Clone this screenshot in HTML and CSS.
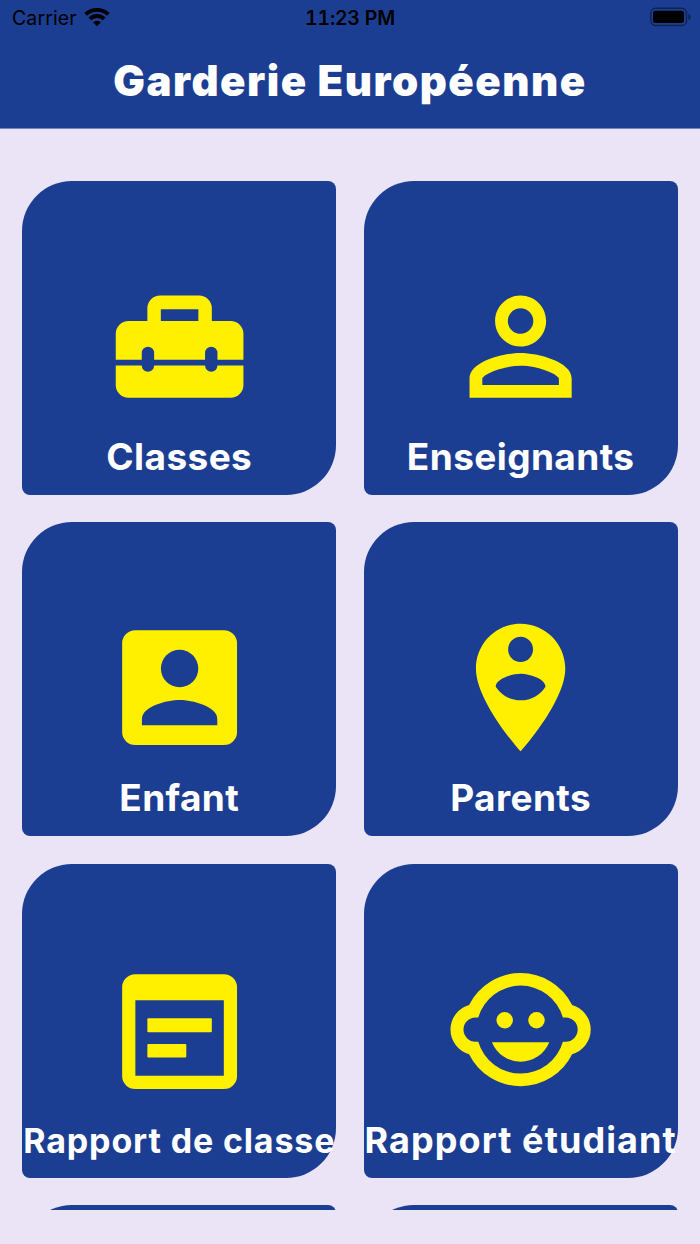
FILE: index.html
```
<!DOCTYPE html>
<html lang="fr">
  <head>
    <meta charset="utf-8">
    <title>Garderie Européenne</title>
    <link rel="stylesheet" href="styles.css">
  </head>
  <body>
    <div class="header">
      <div class="status-bar">
        <div class="status-left">
          <span class="carrier">Carrier</span>
          <svg class="wifi" viewBox="0 0 26 20">
            <path d="M13 19.2l3.9-3.9a5.6 5.6 0 0 0-7.8 0z"/>
            <path class="wave" d="M5.9 11.9a10.2 10.2 0 0 1 14.2 0"/>
            <path class="wave" d="M1.7 7.4a16.4 16.4 0 0 1 22.6 0"/>
          </svg>
        </div>
        <span class="time">11:23 PM</span>
        <div class="status-right">
          <svg class="battery" viewBox="0 0 41 20">
            <rect class="battery-case" x="0.9" y="1.3" width="35.6" height="17.2" rx="4.8"/>
            <rect x="3" y="3.7" width="31" height="12.4" rx="2.4"/>
            <path class="battery-tip" d="M38.3 6.8c1.4.5 2.3 1.7 2.3 3.1s-.9 2.6-2.3 3.1z"/>
          </svg>
        </div>
      </div>
      <h1 class="title">Garderie Européenne</h1>
    </div>
    <div class="grid">
      <div class="card">
        <svg class="icon" viewBox="0 0 24 24">
          <path fill-rule="evenodd" d="M6.95 8V6a2 2 0 0 1 2-2h6.1a2 2 0 0 1 2 2v2H20a2 2 0 0 1 2 2v8a2 2 0 0 1-2 2H4a2 2 0 0 1-2-2v-8a2 2 0 0 1 2-2zM9.06 6.13V8h5.88V6.13z"/>
          <path class="cut" d="M1.9 14.07h20.2v.88H1.9z"/>
          <rect class="cut" x="6.07" y="12.03" width="1.94" height="3.91" rx="0.97"/>
          <rect class="cut" x="15.99" y="12.03" width="1.94" height="3.91" rx="0.97"/>
        </svg>
        <span class="label">Classes</span>
      </div>
      <div class="card">
        <svg class="icon" viewBox="0 0 24 24">
          <path d="M12 6c1.1 0 2 .9 2 2s-.9 2-2 2-2-.9-2-2 .9-2 2-2m0 9c2.7 0 5.8 1.29 6 2v1H6v-.99c.2-.72 3.3-2.01 6-2.01m0-11C9.79 4 8 5.79 8 8s1.79 4 4 4 4-1.79 4-4-1.79-4-4-4zm0 9c-2.67 0-8 1.34-8 4v3h16v-3c0-2.66-5.33-4-8-4z"/>
        </svg>
        <span class="label">Enseignants</span>
      </div>
      <div class="card">
        <svg class="icon" viewBox="0 0 24 24">
          <rect x="3" y="3" width="18" height="18" rx="2.05"/>
          <circle class="cut" cx="12" cy="9.02" r="2.93"/>
          <path class="cut" d="M6.1 16.9c0-1.95 3.9-2.95 5.9-2.95s5.9 1 5.9 2.95v1H6.1z"/>
        </svg>
        <span class="label">Enfant</span>
      </div>
      <div class="card">
        <svg class="icon" viewBox="0 0 24 24">
          <path d="M12 2C8.14 2 5 5.14 5 9c0 5.25 7 13 7 13s7-7.75 7-13c0-3.86-3.14-7-7-7zm0 2.05c1.1 0 1.95.9 1.95 1.98S13.1 8 12 8s-1.95-.89-1.95-1.97.85-1.98 1.95-1.98zM12 14c-1.67 0-3.04-.85-3.9-2.15.02-1.22 2.57-2 3.9-2s3.88.78 3.9 2C15.04 13.15 13.67 14 12 14z"/>
        </svg>
        <span class="label">Parents</span>
      </div>
      <div class="card card-classe">
        <svg class="icon" viewBox="0 0 24 24">
          <rect x="3" y="3" width="18" height="18" rx="2.05"/>
          <path class="cut" d="M5.07 7.07h13.86V18.9H5.07z"/>
          <rect x="6.95" y="9.9" width="10.1" height="2.2" rx="0.15"/>
          <rect x="6.95" y="13.95" width="6.1" height="2.1" rx="0.15"/>
        </svg>
        <span class="label label-classe">Rapport de classe</span>
      </div>
      <div class="card card-etudiant">
        <svg class="icon" viewBox="0 0 24 24">
          <path fill-rule="evenodd" d="M3.93 8.15a9 9 0 0 1 16.14 0 4 4 0 0 1 0 7.7 9 9 0 0 1-16.14 0 4 4 0 0 1 0-7.7zM5.37 10.1H4.95a1.9 1.9 0 0 0 0 3.8h.42a6.9 6.9 0 0 0 13.26 0h.42a1.9 1.9 0 0 0 0-3.8h-.42a6.9 6.9 0 0 0-13.26 0z"/>
          <circle cx="9.51" cy="10.54" r="1.29"/>
          <circle cx="14.49" cy="10.54" r="1.29"/>
          <path d="M7.51 13.98h8.98a4.83 4.83 0 0 1-8.98 0z"/>
        </svg>
        <span class="label label-etudiant">Rapport étudiant</span>
      </div>
      <div class="card"></div>
      <div class="card"></div>
    </div>
  </body>
</html>
```
FILE: styles.css
```
* {
    box-sizing: border-box;
}
body {
    margin: 0;
    height: 1244px;
    background: #ebe4f6;
    font-family: Inter, "Liberation Sans", sans-serif;
    overflow: hidden;
}
.header {
    height: 129px;
    background: #1c3e92;
    border-bottom: 1px solid #7385bb;
}
.status-bar {
    height: 36px;
    padding: 0 12px;
    display: grid;
    grid-template-columns: 1fr auto 1fr;
    align-items: center;
    font-size: 19.5px;
    line-height: 36px;
    color: #000;
}
.status-left {
    display: flex;
    align-items: center;
    gap: 7px;
}
.status-right {
    display: flex;
    justify-content: flex-end;
}
.carrier {
    letter-spacing: 0.1px;
}
.time {
    font-size: 19.5px;
    font-weight: 600;
    font-variant-numeric: tabular-nums;
    letter-spacing: -0.2px;
}
.wifi {
    width: 26px;
    height: 20px;
    margin-bottom: 3px;
}
.wave {
    fill: none;
    stroke: #000;
    stroke-width: 3.9;
}
.battery {
    width: 41px;
    height: 20px;
    margin: 0 -3px 2px 0;
}
.battery-case {
    fill: none;
    stroke: #000;
    stroke-opacity: 0.45;
    stroke-width: 1.4;
}
.battery-tip {
    fill-opacity: 0.45;
}
.title {
    margin: 0;
    padding-top: 17px;
    font-size: 42px;
    line-height: 56px;
    font-weight: 900;
    letter-spacing: 1.5px;
    text-align: center;
    color: #fff;
}
.grid {
    height: 1081px;
    padding: 51.9px 22.2px 0;
    display: grid;
    grid-template-columns: 314.2px 314.2px;
    grid-auto-rows: 314.2px;
    gap: 27.2px;
    overflow: hidden;
}
.card {
    padding-top: 88.8px;
    display: flex;
    flex-direction: column;
    align-items: center;
    background: #1c3e92;
    border-radius: 50px 8px 50px 8px;
}
.card-classe {
    padding-top: 91.3px;
}
.card-etudiant {
    padding-top: 89.4px;
}
.icon {
    width: 153.2px;
    height: 153.2px;
    flex-shrink: 0;
    fill: #fff000;
}
.cut {
    fill: #1c3e92;
}
.label {
    margin-top: 11px;
    font-size: 37px;
    line-height: 46px;
    font-weight: 700;
    letter-spacing: 0.4px;
    white-space: nowrap;
    color: #fff;
}
.label-classe {
    margin-top: 10px;
    font-size: 34px;
    letter-spacing: 0.85px;
}
.label-etudiant {
    font-size: 36px;
    letter-spacing: 1.1px;
}
```
